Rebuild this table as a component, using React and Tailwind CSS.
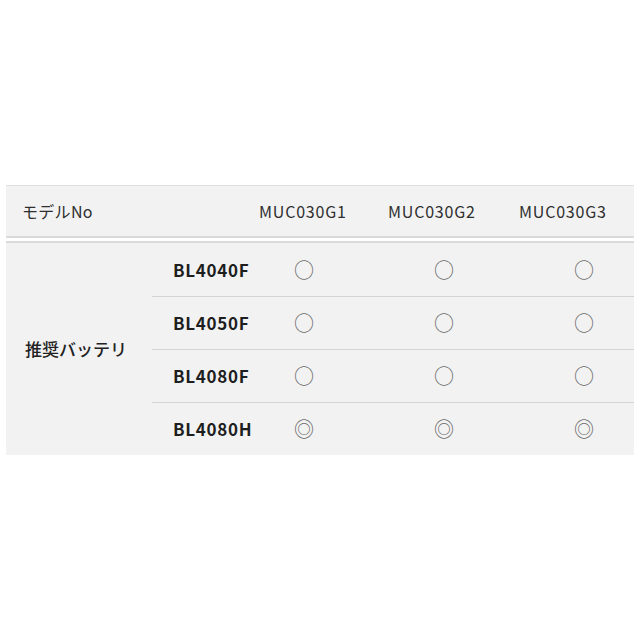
const font = { fontFamily: '"Noto Sans CJK JP", "Noto Sans", sans-serif' };

const models = ["MUC030G1", "MUC030G2", "MUC030G3"];

const rows = [
  { name: "BL4040F", mark: "○" },
  { name: "BL4050F", mark: "○" },
  { name: "BL4080F", mark: "○" },
  { name: "BL4080H", mark: "◎" },
];

export default function App() {
  return (
    <div className="bg-white w-[640px] h-[640px] pt-[185px] px-[6px]" style={font}>
      {/* header */}
      <div className="border-t border-[#dedede] bg-[#f2f2f2] h-[51px] flex items-center pl-[16px] text-[16px] text-[#2e2e2e]">
        <div className="w-[237px] tracking-[0.3px]">モデルNo</div>
        <div className="w-[129px] tracking-[0.8px]">{models[0]}</div>
        <div className="w-[131px] tracking-[0.8px]">{models[1]}</div>
        <div className="tracking-[0.8px]">{models[2]}</div>
      </div>
      <div className="h-[2px] bg-[#dadada]" />
      <div className="h-[3px] bg-white" />
      <div className="h-[2px] bg-[#dadada]" />

      {/* body */}
      <div className="flex bg-[#f2f2f2]">
        <div className="w-[146px] flex items-center pl-[19px] text-[17px] font-medium text-[#222]">
          推奨バッテリ
        </div>
        <div className="flex-1 flex flex-col">
          {rows.map((r, i) => (
            <div
              key={r.name}
              className={
                i === 0
                  ? "h-[53px] flex items-center"
                  : "h-[53px] flex items-center border-t border-[#d4d4d4]"
              }
            >
              <div className="w-[132px] pl-[21px] text-[17px] font-bold text-[#1e1e1e] tracking-[0.7px]">
                {r.name}
              </div>
              <div className="flex gap-[100px]">
                {models.map((m) => (
                  <div
                    key={m}
                    className="w-[40px] flex justify-center text-[20px] leading-none text-[#6a6a6a]"
                  >
                    {r.mark}
                  </div>
                ))}
              </div>
            </div>
          ))}
        </div>
      </div>
    </div>
  );
}
